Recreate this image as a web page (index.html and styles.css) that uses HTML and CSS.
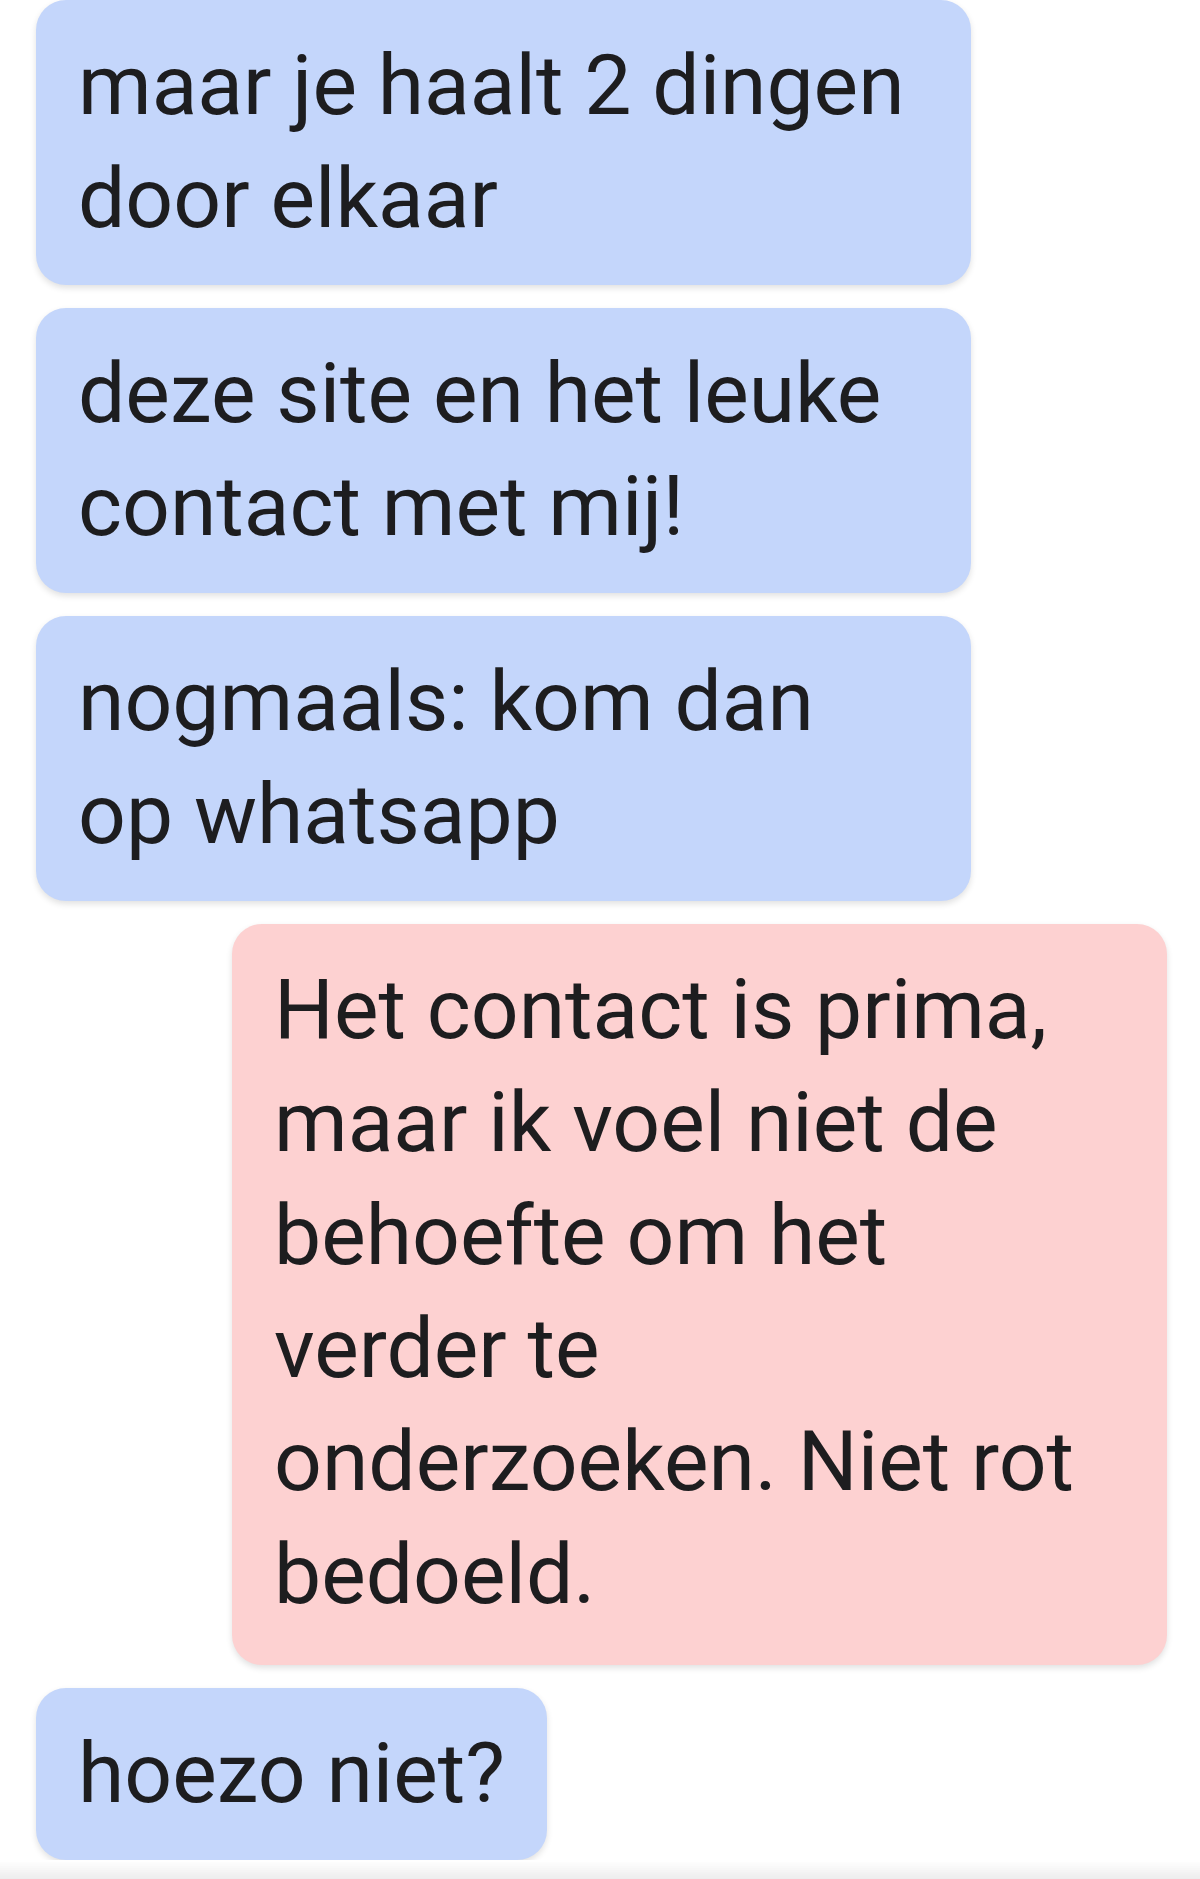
FILE: index.html
```html
<!DOCTYPE html>
<html lang="nl">
<head>
  <meta charset="UTF-8">
  <title>Chat</title>
  <link rel="stylesheet" href="styles.css">
</head>
<body>

  <div class="chat">
    <div class="bericht ontvangen">maar je haalt 2 dingen door elkaar</div>
    <div class="bericht ontvangen">deze site en het leuke contact met mij!</div>
    <div class="bericht ontvangen">nogmaals: kom dan op whatsapp</div>
    <div class="bericht verzonden">Het contact is prima, maar ik voel niet de behoefte om het verder te onderzoeken. Niet rot bedoeld.</div>
    <div class="bericht ontvangen">hoezo niet?</div>
  </div>

  <div class="onderrand"></div>

</body>
</html>
```

FILE: styles.css
```css
body {
  margin: 0;
  background-color: #fff;
  font-family: Roboto, "Noto Sans", sans-serif;
  color: #1d1d1f;
  overflow: hidden;
}
.chat {
  display: flex;
  flex-direction: column;
  align-items: flex-start;
  gap: 23px;
  padding: 0 33px 0 36px;
}
.bericht {
  box-sizing: border-box;
  max-width: 935px;
  padding: 29px 42px 30px 42px;
  border-radius: 30px;
  font-size: 84px;
  line-height: 113px;
  box-shadow: 0 3px 6px rgba(0,0,0,0.12);
}
.ontvangen {
  background-color: #c4d6fb;
}
.verzonden {
  align-self: flex-end;
  background-color: #fdd1d1;
  padding-right: 58px;
  padding-bottom: 34px;
}
.onderrand {
  position: fixed;
  left: 0;
  right: 0;
  bottom: 0;
  height: 18px;
  background: linear-gradient(to bottom, rgba(0,0,0,0), rgba(0,0,0,0.07));
}
```
